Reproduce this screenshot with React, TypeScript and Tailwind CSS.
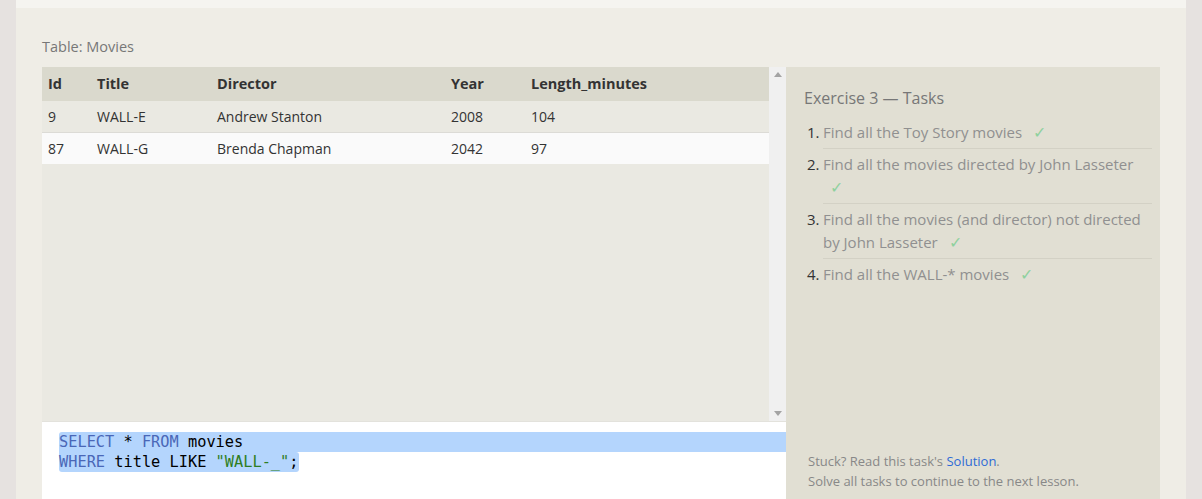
import React from "react";

const rows = [
  { id: "9", title: "WALL-E", director: "Andrew Stanton", year: "2008", length: "104" },
  { id: "87", title: "WALL-G", director: "Brenda Chapman", year: "2042", length: "97" },
];

const tasks = [
  "Find all the Toy Story movies",
  "Find all the movies directed by John Lasseter",
  "Find all the movies (and director) not directed by John Lasseter",
  "Find all the WALL-* movies",
];

function Check() {
  return <span className="ml-[7px] text-[16px] text-[#8fd19e]">✓</span>;
}

export default function App() {
  return (
    <div className="flex h-[499px] w-full overflow-hidden bg-[#e6e2e0] px-4 font-['Open_Sans',sans-serif]">
      <div className="flex flex-1 flex-col border-t-8 border-[#f5f4f0] bg-[#efede6] pl-[26px] pr-[26px]">
        <div className="pt-[29px] pb-[10px] text-[14.5px] leading-[20px] text-[#777]">Table: Movies</div>
        <div className="flex flex-1">
          {/* left: table + editor */}
          <div className="flex w-[744px] flex-col">
            <div className="flex h-[354px]">
              <div className="flex-1 bg-[#eae9e2] text-[14px] text-[#333]">
                <div className="flex h-[34px] items-center bg-[#dad9cd] text-[14.5px] font-bold">
                  <div className="w-[55px] pl-[6px]">Id</div>
                  <div className="w-[120px]">Title</div>
                  <div className="w-[234px]">Director</div>
                  <div className="w-[80px]">Year</div>
                  <div>Length_minutes</div>
                </div>
                {rows.map((r, i) => (
                  <div
                    key={r.id}
                    className={i === 0 ? "flex h-[32px] items-center border-b border-[#dcdbd6] bg-[#eae9e2]" : "flex h-[31px] items-center bg-[#fafafa]"}
                  >
                    <div className="w-[55px] pl-[6px]">{r.id}</div>
                    <div className="w-[120px]">{r.title}</div>
                    <div className="w-[234px]">{r.director}</div>
                    <div className="w-[80px]">{r.year}</div>
                    <div>{r.length}</div>
                  </div>
                ))}
              </div>
              <div className="flex w-[17px] flex-col items-center justify-between bg-[#f0f0f0] py-[5px]">
                <svg width="8" height="5" viewBox="0 0 8 5"><path d="M0 5 L4 0 L8 5 Z" fill="#a3a3a3" /></svg>
                <svg width="8" height="5" viewBox="0 0 8 5"><path d="M0 0 L4 5 L8 0 Z" fill="#a3a3a3" /></svg>
              </div>
            </div>
            <div className="flex-1 border-t border-[#e3e2dc] bg-white pt-[10px] font-['DejaVu_Sans_Mono',monospace] text-[15.3px] leading-[20px]">
              <div className="ml-[17px] rounded-tl-[3px] bg-[#b4d5fd] text-black">
                <span className="text-[#4a67b7]">SELECT</span> * <span className="text-[#4a67b7]">FROM</span> movies
              </div>
              <div className="ml-[17px] w-fit rounded-b-[3px] rounded-r-[3px] bg-[#b4d5fd] pr-[1px] text-black">
                <span className="text-[#4a67b7]">WHERE</span> title LIKE <span className="text-[#2e7d22]">"WALL-_"</span>;
              </div>
            </div>
          </div>
          {/* right: tasks panel */}
          <div className="flex flex-1 flex-col bg-[#e1dfd3] pl-[18px] pr-[8px] pt-[20px]">
            <div className="text-[16px] leading-[22px] text-[#777]">Exercise 3 — Tasks</div>
            <ol className="mt-[8px] text-[15px] leading-[23px]">
              {tasks.map((t, i) => (
                <li key={t} className="flex">
                  <span className="w-[19px] shrink-0 pl-[3px] pt-[4px] text-[#333]">{i + 1}.</span>
                  <div
                    className={i < tasks.length - 1 ? "flex-1 border-b border-[#d3d1c5] pb-[4px] pt-[4px] text-[#909090]" : "flex-1 pt-[4px] text-[#909090]"}
                  >
                    {t}{" "}
                    <Check />
                  </div>
                </li>
              ))}
            </ol>
            <div className="mt-auto pb-[8px] pl-[4px] text-[13px] leading-[20px] text-[#888]">
              <div>
                Stuck? Read this task's <span className="text-[#2e6bd6]">Solution</span>.
              </div>
              <div>Solve all tasks to continue to the next lesson.</div>
            </div>
          </div>
        </div>
      </div>
    </div>
  );
}
